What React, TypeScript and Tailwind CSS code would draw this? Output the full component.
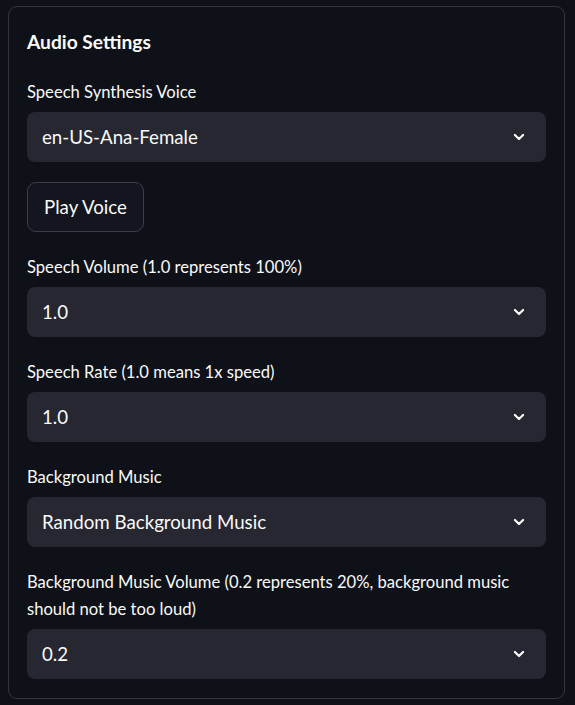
const font = { fontFamily: '"Source Sans Pro", Lato, "Noto Sans", sans-serif' };

function Chevron() {
  return (
    <svg width="14" height="14" viewBox="0 0 24 24" className="shrink-0">
      <path
        d="M5 8.5l7 7 7-7"
        fill="none"
        stroke="#fafafa"
        strokeWidth="3.8"
        strokeLinecap="round"
        strokeLinejoin="round"
      />
    </svg>
  );
}

function Select({ label, value }: { label: string; value: string }) {
  return (
    <div className="flex flex-col">
      <label className="mb-[6px] pt-[2px] text-[16.6px] leading-[27px] text-[#fafafa]">{label}</label>
      <div className="flex h-[50px] items-center justify-between rounded-[8px] bg-[#262730] pl-[15px] pr-[20px]">
        <span className="text-[18.7px] text-[#fafafa]">{value}</span>
        <Chevron />
      </div>
    </div>
  );
}

export default function App() {
  return (
    <div className="min-h-[705px] w-[575px] bg-[#0e1117] px-[8px] pt-[6px]" style={font}>
      <div className="flex w-[557px] flex-col gap-[20px] rounded-[9px] border border-[#33363e] px-[18px] pb-[19px] pt-[20px]">
        <h3 className="text-[19.2px] font-bold leading-[30px] text-[#fafafa]">Audio Settings</h3>
        <Select label="Speech Synthesis Voice" value="en-US-Ana-Female" />
        <div>
          <button className="h-[50px] rounded-[9px] border border-[#3b3e46] bg-[#13161e] px-[16px] text-[18.7px] text-[#fafafa]">
            Play Voice
          </button>
        </div>
        <Select label="Speech Volume (1.0 represents 100%)" value="1.0" />
        <Select label="Speech Rate (1.0 means 1x speed)" value="1.0" />
        <Select label="Background Music" value="Random Background Music" />
        <Select
          label="Background Music Volume (0.2 represents 20%, background music should not be too loud)"
          value="0.2"
        />
      </div>
    </div>
  );
}
